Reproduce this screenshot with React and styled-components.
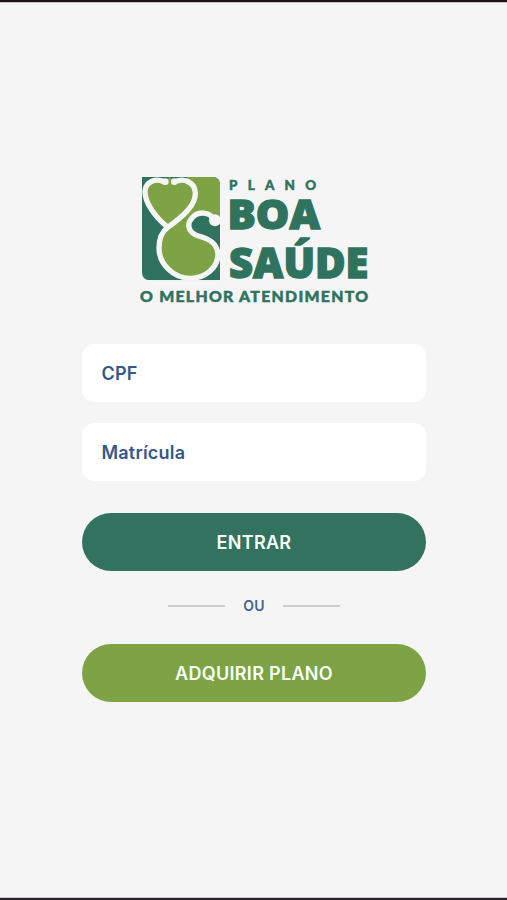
import React from "react";
import styled, { createGlobalStyle } from "styled-components";

const GlobalStyle = createGlobalStyle`
  *, *::before, *::after { box-sizing: border-box; }
  body { margin: 0; background: #f5f5f5; }
`;

const Screen = styled.main`
  height: 900px;
  display: flex;
  flex-direction: column;
  align-items: center;
  padding-top: 173px;
  background: #f5f5f5;
  border-top: 2px solid #191517;
  border-bottom: 2px solid #29272b;
  box-shadow: inset 0 1px 0 #c4c4c4, inset 0 -1px 0 #c8c8c8;
  font-family: Inter, "Liberation Sans", sans-serif;
`;

const Logo = styled.svg`
  display: block;
  width: 230px;
  height: 130px;
  flex: none;
  overflow: visible;
  fill: #2f735e;
  margin-left: 3px;
`;

const Word = styled.text`
  font-family: ${(p) => p.$face}, sans-serif;
  font-weight: 900;
  font-size: ${(p) => p.$size}px;
  stroke: #2f735e;
  stroke-width: ${(p) => p.$weight};
`;

const Form = styled.form`
  width: 344px;
  margin: 39px 0 0 1px;
  display: flex;
  flex-direction: column;
`;

const Field = styled.input`
  height: 58px;
  margin-bottom: 21px;
  padding: 0 19.5px;
  border: 0;
  border-radius: 12px;
  background: #fff;
  color: #365886;
  font: 600 18px Inter, sans-serif;
  letter-spacing: 0.2px;
  outline: none;
  &::placeholder { color: #365886; opacity: 1; }
`;

const Button = styled.button`
  height: 58px;
  margin-top: ${(p) => p.$gap}px;
  padding: 0;
  border: 0;
  border-radius: 29px;
  background: ${(p) => p.$color};
  color: #f8fff9;
  font: 600 18px Inter, sans-serif;
  letter-spacing: 0.3px;
`;

const Divider = styled.div`
  height: 73px;
  display: flex;
  align-items: center;
  justify-content: center;
  gap: 18px;
  color: #46638f;
  font-size: 14px;
  font-weight: 600;
  line-height: 20px;
  letter-spacing: 0.2px;
  padding-bottom: 4px;
`;

const Line = styled.span`
  width: 57px;
  height: 2px;
  background: #cccdcd;
`;

function BrandLogo() {
  return (
    <Logo viewBox="0 0 230 130" role="img" aria-label="Plano Boa Saúde">
      <defs>
        <clipPath id="tile">
          <path d="M30 27H241Q264 27 264 50V337H55Q30 337 30 312Z" />
        </clipPath>
      </defs>
      <g transform="translate(-8 -7) scale(.33333)">
        <g clipPath="url(#tile)">
          <path d="M30 27H264V337H30Z" />
          <g fill="#7da344">
            <path d="M98 42C72 29 42 40 39 68C37 103 70 147 107 175C160 146 191 109 190 75C189 43 155 28 128 42L113 27Z" />
            <path d="M165 27H264V157H244C236 132 195 129 180 150C161 172 172 195 200 202C229 208 255 224 258 258C258 299 220 331 175 331C119 331 82 288 82 240C82 212 91 190 107 178C154 149 193 111 190 75C188 52 180 40 165 33Z" />
          </g>
          <g fill="none" stroke="#f5f5f5" strokeWidth="16" strokeLinecap="round" strokeLinejoin="round">
            <path d="M98 42C72 29 42 40 39 68C37 103 70 147 104 175" />
            <path d="M128 42C155 28 189 43 190 75C191 109 160 140 107 178C91 190 81 212 81 240C81 288 124 331 175 331C220 331 258 299 258 258C255 224 229 212 200 204C170 195 162 170 180 150C195 130 235 128 246 157" />
          </g>
        </g>
        <g fill="#f5f5f5">
          <circle cx="100" cy="41" r="10" />
          <circle cx="127" cy="41" r="10" />
          <circle cx="249" cy="157" r="18" />
        </g>
      </g>
      <Word $face="Lato" $size={13.4} $weight={0.5} x="89" y="15.1" textLength="87" lengthAdjust="spacing">PLANO</Word>
      <Word $face="'Open Sans'" $size={41.5} $weight={1.4} x="87.5" y="54.4" textLength="92.5" lengthAdjust="spacingAndGlyphs">BOA</Word>
      <Word $face="'Open Sans'" $size={42} $weight={1.4} x="89" y="102.5" textLength="139.5" lengthAdjust="spacingAndGlyphs">SAÚDE</Word>
      <Word $face="Lato" $size={15.8} $weight={0.5} x="0" y="127.3" textLength="228" lengthAdjust="spacing">O MELHOR ATENDIMENTO</Word>
    </Logo>
  );
}

export default function App() {
  return (
    <>
      <GlobalStyle />
      <Screen>
        <BrandLogo />
        <Form>
          <Field placeholder="CPF" aria-label="CPF" />
          <Field placeholder="Matrícula" aria-label="Matrícula" />
          <Button type="button" $gap={11} $color="#33725f">ENTRAR</Button>
          <Divider>
            <Line />
            <span>OU</span>
            <Line />
          </Divider>
          <Button type="button" $gap={0} $color="#7da344">ADQUIRIR PLANO</Button>
        </Form>
      </Screen>
    </>
  );
}
